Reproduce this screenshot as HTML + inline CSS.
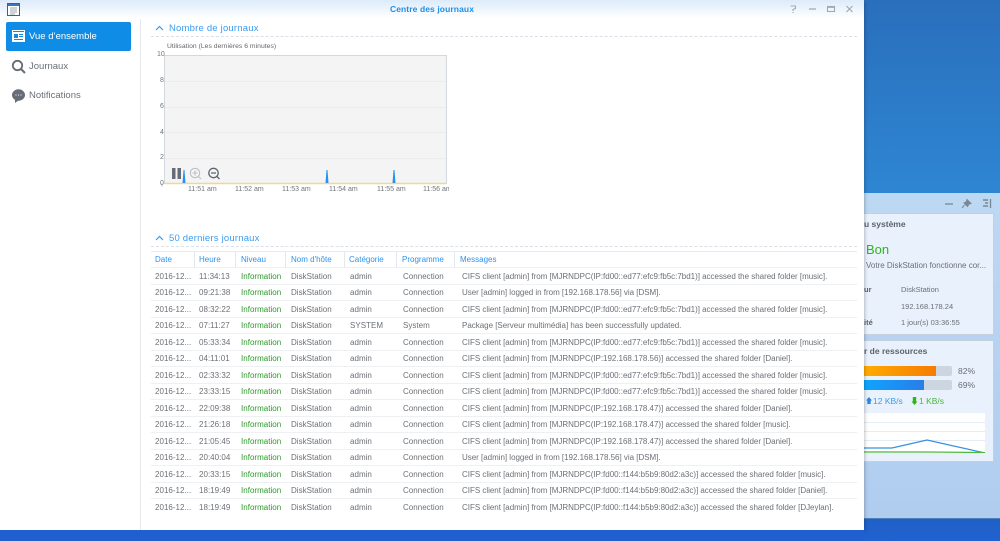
<!DOCTYPE html>
<html><head><meta charset="utf-8">
<style>
html,body{margin:0;padding:0}
body{width:1000px;height:541px;overflow:hidden;position:relative;font-family:"Liberation Sans",sans-serif;background:#2a71bf;filter:blur(.3px)}
div,span{position:absolute;white-space:nowrap}
#bg{left:0;top:0;width:1000px;height:541px;background:linear-gradient(180deg,#2a6fbc 0,#2c7bc8 100px,#2e86d2 192px,#2e86d2 400px)}
#bar{left:864px;top:518px;width:136px;height:23px;background:linear-gradient(180deg,#2060c8,#1f62d0);border-top:1px solid #4f80b8;box-sizing:border-box}
#bar2{left:0;top:530px;width:864px;height:11px;background:#1f5fd0}
#wg{left:864px;top:193px;width:136px;height:325px;background:linear-gradient(180deg,#bcd8f2,#b0ccef)}
.card{left:850px;width:144px;background:#e8f1fc;border:1px solid #c4d0de;box-sizing:border-box}
#win{left:0;top:0;width:864px;height:530px;background:#fff;box-shadow:0 1px 4px rgba(0,0,0,.35)}
#tb{left:0;top:0;width:864px;height:18px;background:linear-gradient(180deg,#dcebfa,#ffffff)}
#ttl{left:0;width:864px;text-align:center;top:4px;font-size:8.5px;font-weight:bold;color:#1f8fe6;letter-spacing:.1px}
#sep{left:140px;top:19px;width:1px;height:511px;background:#e6e8eb}
#nav{left:6px;top:22px;width:125px;height:29px;background:#0f8ce6;border-radius:2px}
.nv{font-size:9.5px;color:#6a7078;left:29px}
.sec{left:169px;font-size:9.5px;color:#3a9cf0;letter-spacing:.2px}
.dash{left:151px;width:706px;border-top:1px dashed #d9e0e8;height:0}
.t{font-size:8px;color:#6b7077;letter-spacing:.02px}
.m{letter-spacing:-.02px}
.h{font-size:8px;color:#2d93ee;top:255px}
.vl{top:252px;width:1px;height:16px;background:#e4e9ef}
.rl{left:151px;width:706px;height:1px;background:#eef0f3}
.g{color:#2a9a2a}
.ax{font-size:7px;color:#70757c}
.tk{font-size:7px;color:#70757c;top:186px}
.w{font-size:8px;color:#6b7077}
.wb{font-size:8px;font-weight:bold;color:#5d636b}
</style></head><body>
<div id="bg"></div>
<div id="wg"></div>
<div id="bar"></div>
<div class="card" style="top:213px;height:122px"></div>
<div class="card" style="top:340px;height:122px"></div>

<svg style="position:absolute;left:940px;top:197px" width="56" height="14" viewBox="0 0 56 14"><path d="M5 7h8" stroke="#7c8794" stroke-width="1.3"/><path d="M27 2.5l4 4-2 .5-1.500 2.500-3.500-3.500 2.500-1.500zM24.500 8l-2.500 3" fill="#7c8794" stroke="#7c8794"/><path d="M43 3h5M45 6h3M43 9h5" stroke="#7c8794" stroke-width="1.500"/><path d="M50.500 2v9" stroke="#7c8794" stroke-width="1.300"/></svg>
<div class="wb" style="left:864px;top:219px;font-size:8.500px">u système</div>
<div style="left:866px;top:242px;font-size:13px;color:#2fb51c">Bon</div>
<div class="w" style="left:866px;top:261px">Votre DiskStation fonctionne cor...</div>
<div class="wb" style="left:864px;top:285px;font-size:7.500px">ur</div>
<div class="w" style="left:901px;top:285px;font-size:7.500px">DiskStation</div>
<div class="w" style="left:901px;top:302px;font-size:7.500px">192.168.178.24</div>
<div class="wb" style="left:864px;top:318px;font-size:7.500px">ité</div>
<div class="w" style="left:901px;top:318px;font-size:7.500px">1 jour(s) 03:36:55</div>
<div class="wb" style="left:864px;top:346px;font-size:8.500px">r de ressources</div>
<div style="left:864px;top:366px;width:88px;height:10px;background:#ccd6e0;border-radius:2px"></div>
<div style="left:864px;top:366px;width:72px;height:10px;background:linear-gradient(90deg,#ffab00,#f57c00)"></div>
<div class="w" style="left:958px;top:366px;font-size:8.500px">82%</div>
<div style="left:864px;top:380px;width:88px;height:10px;background:#ccd6e0;border-radius:2px"></div>
<div style="left:864px;top:380px;width:60px;height:10px;background:linear-gradient(90deg,#0ea5ff,#2a7de8)"></div>
<div class="w" style="left:958px;top:380px;font-size:8.500px">69%</div>
<svg style="position:absolute;left:864px;top:396px" width="130" height="12" viewBox="0 0 130 12"><path d="M5 1l3 3.500H6.700V8H3.300V4.500H2z" fill="#2a86e0"/><path d="M50.500 9l-3-3.500h1.300V1h3.400v4.500h1.300z" fill="#2fb51c"/></svg>
<div class="w" style="left:873px;top:396px;color:#3a9cf0;font-size:8.500px">12 KB/s</div>
<div class="w" style="left:919px;top:396px;color:#49b53a;font-size:8.500px">1 KB/s</div>
<svg style="position:absolute;left:864px;top:413px" width="121" height="40" viewBox="0 0 121 40"><rect width="121" height="40" fill="#fff"/><path d="M0 9.500h121M0 18.500h121M0 27.500h121" stroke="#e4edf5"/><path d="M0 35h28l35-8 58 13" fill="none" stroke="#3690e0" stroke-width="1.200"/><path d="M0 39h60l61 .5" fill="none" stroke="#4cb83c" stroke-width="1.200"/></svg>

<div id="win"></div>
<div id="tb"></div>
<svg style="position:absolute;left:7px;top:3px" width="13" height="13" viewBox="0 0 13 13"><rect x=".5" y=".5" width="12" height="12" fill="#fff" stroke="#2d62a8"/><rect x="1" y="1" width="11" height="2" fill="#3a75bd"/><path d="M3 5h7M3 7h7M3 9h7M3 11h5" stroke="#7d8a98" stroke-width=".8"/></svg>
<div id="ttl">Centre des journaux</div>
<svg style="position:absolute;left:788px;top:4px" width="68" height="10" viewBox="0 0 68 10"><path d="M2.500 2h5v2.500l-2.500 1v1.500M5 8v1" fill="none" stroke="#a3a9b0" stroke-width="1.100"/><path d="M21 5h7" stroke="#a3a9b0" stroke-width="1.300"/><rect x="39.500" y="2.500" width="7" height="5" fill="none" stroke="#a3a9b0" stroke-width="1.100"/><path d="M39.500 3h7" stroke="#a3a9b0" stroke-width="1.800"/><path d="M58.500 2l6 6M64.500 2l-6 6" stroke="#a3a9b0" stroke-width="1.200"/></svg>
<div id="sep"></div>

<div id="nav"></div>
<svg style="position:absolute;left:12px;top:30px" width="13" height="12" viewBox="0 0 13 12"><rect width="13" height="12" fill="#fff"/><rect x="1" y="1" width="11" height="1" fill="#0f8ce6"/><rect x="2" y="4" width="4" height="4" fill="#0f8ce6"/><path d="M7 4.500h4M7 6.500h4M2 9.500h9" stroke="#0f8ce6"/></svg>
<div class="nv" style="top:31px;color:#fff">Vue d’ensemble</div>
<svg style="position:absolute;left:11px;top:59px" width="15" height="15" viewBox="0 0 15 15"><circle cx="6.500" cy="6.500" r="4.700" fill="none" stroke="#666d76" stroke-width="1.800"/><path d="M10 10l4 4" stroke="#666d76" stroke-width="2"/></svg>
<div class="nv" style="top:61px">Journaux</div>
<svg style="position:absolute;left:12px;top:89px" width="13" height="14" viewBox="0 0 13 14"><ellipse cx="6.500" cy="6" rx="6.500" ry="5.700" fill="#666d76"/><path d="M3 10v4l4-3z" fill="#666d76"/><path d="M3.500 6h1M6 6h1M8.500 6h1" stroke="#fff"/></svg>
<div class="nv" style="top:90px">Notifications</div>

<svg style="position:absolute;left:155px;top:25px" width="9" height="6" viewBox="0 0 9 6"><path d="M1 5l3.500-3.500L8 5" fill="none" stroke="#3a9cf0" stroke-width="1.200"/></svg>
<div class="sec" style="top:23px">Nombre de journaux</div>
<div class="dash" style="top:36px"></div>
<div class="t" style="left:167px;top:43px;font-size:6.800px;color:#666">Utilisation (Les dernières 6 minutes)</div>

<svg style="position:absolute;left:160px;top:52px" width="290" height="136" viewBox="0 0 290 136">
<rect x="4.500" y="3.500" width="282" height="128" fill="#f4f4f5" stroke="#d2d8de"/>
<path d="M5 29.500h281M5 55.500h281M5 80.500h281M5 106.500h281" stroke="#ececee"/>
<path d="M5 131.500h281" stroke="#f0d890" stroke-width="1.500"/>
<path d="M22.500 131l1-13h1l1 13zM165.500 131l1-13h1l1 13zM232.500 131l1-13h1l1 13z" fill="#2a90ee"/>
<path d="M2 131v4" stroke="#ccd2d9"/>
<rect x="12" y="116" width="3.500" height="11" fill="#666d78"/><rect x="17.500" y="116" width="3.500" height="11" fill="#666d78"/>
<circle cx="35" cy="121" r="4.700" fill="none" stroke="#bcc0c6" stroke-width="1.100"/><path d="M32.500 121h5M35 118.500v5M38.500 124.500l2.500 2.500" stroke="#bcc0c6" stroke-width="1.100"/>
<circle cx="53.500" cy="121" r="4.700" fill="none" stroke="#5c6470" stroke-width="1.300"/><path d="M51 121h5M57 124.500l2.500 2.500" stroke="#5c6470" stroke-width="1.300"/>
</svg>
<div class="ax" style="left:157px;top:51px">10</div>
<div class="ax" style="left:160px;top:77px">8</div>
<div class="ax" style="left:160px;top:103px">6</div>
<div class="ax" style="left:160px;top:129px">4</div>
<div class="ax" style="left:160px;top:154px">2</div>
<div class="ax" style="left:160px;top:180px">0</div>
<div class="tk" style="left:188px">11:51 am</div>
<div class="tk" style="left:235px">11:52 am</div>
<div class="tk" style="left:282px">11:53 am</div>
<div class="tk" style="left:329px">11:54 am</div>
<div class="tk" style="left:377px">11:55 am</div>
<div style="left:423px;top:184px;width:26px;height:12px;overflow:hidden"><span class="tk" style="left:0;top:2px">11:56 am</span></div>

<svg style="position:absolute;left:155px;top:235px" width="9" height="6" viewBox="0 0 9 6"><path d="M1 5l3.500-3.500L8 5" fill="none" stroke="#3a9cf0" stroke-width="1.200"/></svg>
<div class="sec" style="top:233px">50 derniers journaux</div>
<div class="dash" style="top:246px"></div>
<div class="rl" style="top:251px;background:#e4ebf2"></div>
<div class="rl" style="top:267px"></div>
<div class="vl" style="left:194px"></div><div class="vl" style="left:235px"></div><div class="vl" style="left:285px"></div><div class="vl" style="left:344px"></div><div class="vl" style="left:396px"></div><div class="vl" style="left:454px"></div>
<div class="h" style="left:155px">Date</div><div class="h" style="left:199px">Heure</div><div class="h" style="left:241px">Niveau</div><div class="h" style="left:291px">Nom d'hôte</div><div class="h" style="left:349px">Catégorie</div><div class="h" style="left:402px">Programme</div><div class="h" style="left:460px">Messages</div>

<div class="rl" style="top:284px"></div><div class="rl" style="top:300px"></div><div class="rl" style="top:317px"></div><div class="rl" style="top:333px"></div><div class="rl" style="top:350px"></div><div class="rl" style="top:366px"></div><div class="rl" style="top:383px"></div><div class="rl" style="top:399px"></div><div class="rl" style="top:416px"></div><div class="rl" style="top:432px"></div><div class="rl" style="top:449px"></div><div class="rl" style="top:465px"></div><div class="rl" style="top:482px"></div><div class="rl" style="top:498px"></div>

<div class="t" style="left:155px;top:272px">2016-12...</div><div class="t" style="left:199px;top:272px">11:34:13</div><div class="t g" style="left:241px;top:272px">Information</div><div class="t" style="left:291px;top:272px">DiskStation</div><div class="t" style="left:350px;top:272px">admin</div><div class="t" style="left:403px;top:272px">Connection</div><div class="t m" style="left:462px;top:272px">CIFS client [admin] from [MJRNDPC(IP:fd00::ed77:efc9:fb5c:7bd1)] accessed the shared folder [music].</div>
<div class="t" style="left:155px;top:288px">2016-12...</div><div class="t" style="left:199px;top:288px">09:21:38</div><div class="t g" style="left:241px;top:288px">Information</div><div class="t" style="left:291px;top:288px">DiskStation</div><div class="t" style="left:350px;top:288px">admin</div><div class="t" style="left:403px;top:288px">Connection</div><div class="t m" style="left:462px;top:288px">User [admin] logged in from [192.168.178.56] via [DSM].</div>
<div class="t" style="left:155px;top:305px">2016-12...</div><div class="t" style="left:199px;top:305px">08:32:22</div><div class="t g" style="left:241px;top:305px">Information</div><div class="t" style="left:291px;top:305px">DiskStation</div><div class="t" style="left:350px;top:305px">admin</div><div class="t" style="left:403px;top:305px">Connection</div><div class="t m" style="left:462px;top:305px">CIFS client [admin] from [MJRNDPC(IP:fd00::ed77:efc9:fb5c:7bd1)] accessed the shared folder [music].</div>
<div class="t" style="left:155px;top:321px">2016-12...</div><div class="t" style="left:199px;top:321px">07:11:27</div><div class="t g" style="left:241px;top:321px">Information</div><div class="t" style="left:291px;top:321px">DiskStation</div><div class="t" style="left:350px;top:321px">SYSTEM</div><div class="t" style="left:403px;top:321px">System</div><div class="t m" style="left:462px;top:321px">Package [Serveur multimédia] has been successfully updated.</div>
<div class="t" style="left:155px;top:338px">2016-12...</div><div class="t" style="left:199px;top:338px">05:33:34</div><div class="t g" style="left:241px;top:338px">Information</div><div class="t" style="left:291px;top:338px">DiskStation</div><div class="t" style="left:350px;top:338px">admin</div><div class="t" style="left:403px;top:338px">Connection</div><div class="t m" style="left:462px;top:338px">CIFS client [admin] from [MJRNDPC(IP:fd00::ed77:efc9:fb5c:7bd1)] accessed the shared folder [music].</div>
<div class="t" style="left:155px;top:354px">2016-12...</div><div class="t" style="left:199px;top:354px">04:11:01</div><div class="t g" style="left:241px;top:354px">Information</div><div class="t" style="left:291px;top:354px">DiskStation</div><div class="t" style="left:350px;top:354px">admin</div><div class="t" style="left:403px;top:354px">Connection</div><div class="t m" style="left:462px;top:354px">CIFS client [admin] from [MJRNDPC(IP:192.168.178.56)] accessed the shared folder [Daniel].</div>
<div class="t" style="left:155px;top:371px">2016-12...</div><div class="t" style="left:199px;top:371px">02:33:32</div><div class="t g" style="left:241px;top:371px">Information</div><div class="t" style="left:291px;top:371px">DiskStation</div><div class="t" style="left:350px;top:371px">admin</div><div class="t" style="left:403px;top:371px">Connection</div><div class="t m" style="left:462px;top:371px">CIFS client [admin] from [MJRNDPC(IP:fd00::ed77:efc9:fb5c:7bd1)] accessed the shared folder [music].</div>
<div class="t" style="left:155px;top:387px">2016-12...</div><div class="t" style="left:199px;top:387px">23:33:15</div><div class="t g" style="left:241px;top:387px">Information</div><div class="t" style="left:291px;top:387px">DiskStation</div><div class="t" style="left:350px;top:387px">admin</div><div class="t" style="left:403px;top:387px">Connection</div><div class="t m" style="left:462px;top:387px">CIFS client [admin] from [MJRNDPC(IP:fd00::ed77:efc9:fb5c:7bd1)] accessed the shared folder [music].</div>
<div class="t" style="left:155px;top:404px">2016-12...</div><div class="t" style="left:199px;top:404px">22:09:38</div><div class="t g" style="left:241px;top:404px">Information</div><div class="t" style="left:291px;top:404px">DiskStation</div><div class="t" style="left:350px;top:404px">admin</div><div class="t" style="left:403px;top:404px">Connection</div><div class="t m" style="left:462px;top:404px">CIFS client [admin] from [MJRNDPC(IP:192.168.178.47)] accessed the shared folder [Daniel].</div>
<div class="t" style="left:155px;top:420px">2016-12...</div><div class="t" style="left:199px;top:420px">21:26:18</div><div class="t g" style="left:241px;top:420px">Information</div><div class="t" style="left:291px;top:420px">DiskStation</div><div class="t" style="left:350px;top:420px">admin</div><div class="t" style="left:403px;top:420px">Connection</div><div class="t m" style="left:462px;top:420px">CIFS client [admin] from [MJRNDPC(IP:192.168.178.47)] accessed the shared folder [music].</div>
<div class="t" style="left:155px;top:437px">2016-12...</div><div class="t" style="left:199px;top:437px">21:05:45</div><div class="t g" style="left:241px;top:437px">Information</div><div class="t" style="left:291px;top:437px">DiskStation</div><div class="t" style="left:350px;top:437px">admin</div><div class="t" style="left:403px;top:437px">Connection</div><div class="t m" style="left:462px;top:437px">CIFS client [admin] from [MJRNDPC(IP:192.168.178.47)] accessed the shared folder [Daniel].</div>
<div class="t" style="left:155px;top:453px">2016-12...</div><div class="t" style="left:199px;top:453px">20:40:04</div><div class="t g" style="left:241px;top:453px">Information</div><div class="t" style="left:291px;top:453px">DiskStation</div><div class="t" style="left:350px;top:453px">admin</div><div class="t" style="left:403px;top:453px">Connection</div><div class="t m" style="left:462px;top:453px">User [admin] logged in from [192.168.178.56] via [DSM].</div>
<div class="t" style="left:155px;top:470px">2016-12...</div><div class="t" style="left:199px;top:470px">20:33:15</div><div class="t g" style="left:241px;top:470px">Information</div><div class="t" style="left:291px;top:470px">DiskStation</div><div class="t" style="left:350px;top:470px">admin</div><div class="t" style="left:403px;top:470px">Connection</div><div class="t m" style="left:462px;top:470px">CIFS client [admin] from [MJRNDPC(IP:fd00::f144:b5b9:80d2:a3c)] accessed the shared folder [music].</div>
<div class="t" style="left:155px;top:486px">2016-12...</div><div class="t" style="left:199px;top:486px">18:19:49</div><div class="t g" style="left:241px;top:486px">Information</div><div class="t" style="left:291px;top:486px">DiskStation</div><div class="t" style="left:350px;top:486px">admin</div><div class="t" style="left:403px;top:486px">Connection</div><div class="t m" style="left:462px;top:486px">CIFS client [admin] from [MJRNDPC(IP:fd00::f144:b5b9:80d2:a3c)] accessed the shared folder [Daniel].</div>
<div class="t" style="left:155px;top:503px">2016-12...</div><div class="t" style="left:199px;top:503px">18:19:49</div><div class="t g" style="left:241px;top:503px">Information</div><div class="t" style="left:291px;top:503px">DiskStation</div><div class="t" style="left:350px;top:503px">admin</div><div class="t" style="left:403px;top:503px">Connection</div><div class="t m" style="left:462px;top:503px">CIFS client [admin] from [MJRNDPC(IP:fd00::f144:b5b9:80d2:a3c)] accessed the shared folder [DJeylan].</div>
<div id="bar2"></div>
</body></html>
